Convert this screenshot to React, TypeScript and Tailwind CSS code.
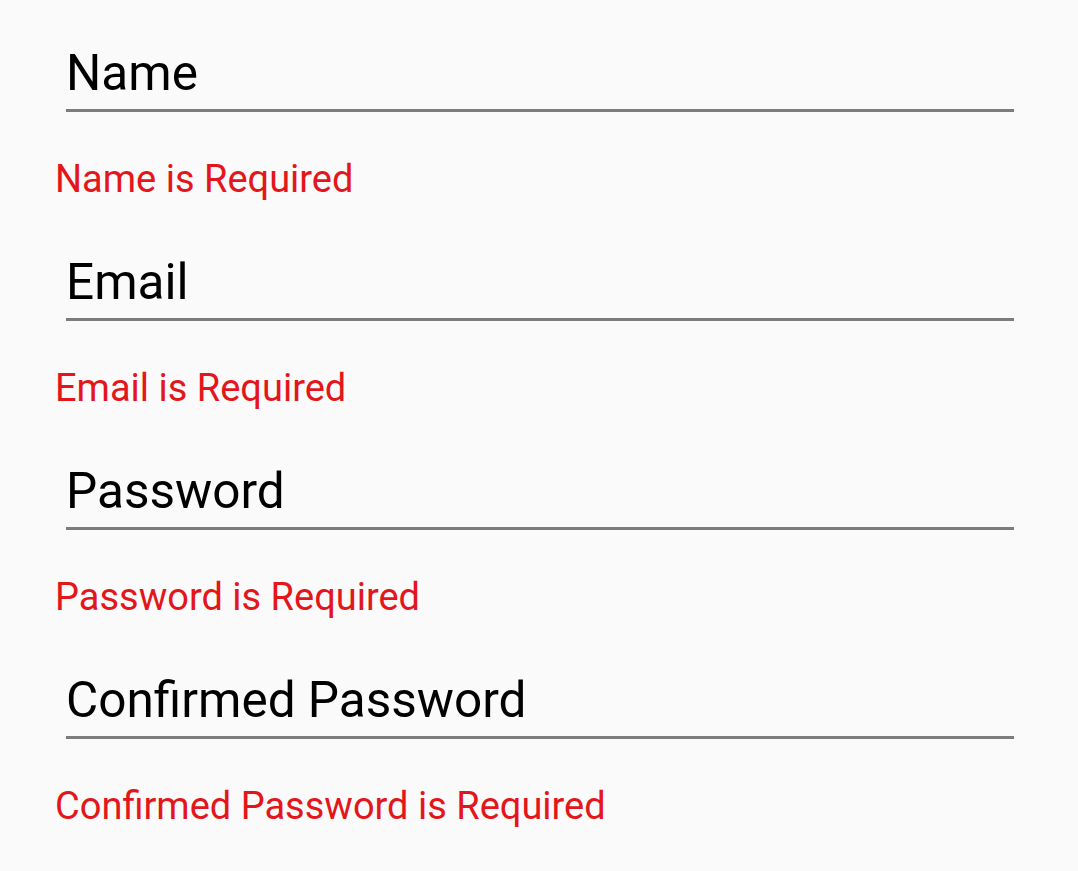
import React from 'react';

const fields = ['Name', 'Email', 'Password', 'Confirmed Password'];

const Field = ({ label }: { label: string }) => (
  <div className="mb-[56px]">
    <input
      type="text"
      placeholder={label}
      className="block h-[50px] w-[948px] ml-[11px] px-0 bg-transparent text-[49.5px] leading-[50px] text-black placeholder:text-black outline-none"
    />
    <div className="ml-[11px] mt-[11px] h-[3px] w-[948px] bg-[#7c7c7c]" />
    <p className="mt-[46px] h-[43px] text-[38px] leading-[43px] text-[#e3161b]">
      {label} is Required
    </p>
  </div>
);

export default function App() {
  return (
    <div
      className="min-h-screen bg-[#fafafa] pt-[48px] pl-[55px]"
      style={{ fontFamily: 'Roboto, "Noto Sans", sans-serif' }}
    >
      {fields.map((f) => (
        <Field key={f} label={f} />
      ))}
    </div>
  );
}
